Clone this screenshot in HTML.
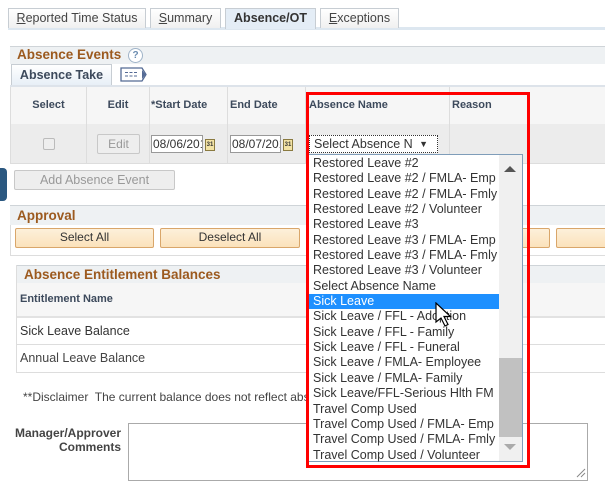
<!DOCTYPE html>
<html><head><meta charset="utf-8"><style>
*{box-sizing:border-box;margin:0;padding:0}
body{width:605px;height:482px;overflow:hidden;background:#fff;font-family:"Liberation Sans",Arial,sans-serif;font-size:12px;color:#333;position:relative}
.a{position:absolute}
.tab{position:absolute;top:8px;height:20px;border:1px solid #c7cdd3;border-bottom:none;background:linear-gradient(#fff,#f0f0f0);text-align:center;line-height:18px;font-size:12.5px;color:#444}
.tab u{text-decoration:underline}
.hdr{position:absolute;background:#eef1f3;border-top:1px solid #cfd4d8;font-weight:bold;font-size:13.5px;padding-left:7px;line-height:19px;color:#9c5a1f}
.th{position:absolute;top:87px;height:37px;line-height:37px;font-weight:bold;font-size:11px;color:#3d4a5c;text-align:center}
.btn{position:absolute;border:1px solid #d9a66a;border-radius:2px;background:linear-gradient(#fdf0da,#fbe2bb);text-align:center;line-height:17px;font-size:12px;color:#333}
.item{height:15.35px;line-height:15px;padding-left:4px;font-size:12.5px;color:#333;white-space:nowrap;overflow:hidden}
.cal{position:absolute;width:10px;height:12px;background:#f3e3a5;border:1px solid #8a7a40;font-size:6px;line-height:10px;text-align:center;font-weight:bold;color:#333}
</style></head><body>
<div class="a" style="left:8px;top:27px;width:597px;height:3px;background:#dde7f0"></div>
<div class="tab" style="left:8px;width:138px"><u>R</u>eported Time Status</div>
<div class="tab" style="left:150px;width:71px"><u>S</u>ummary</div>
<div class="tab" style="left:225px;width:91px;background:#e4edf6;font-weight:bold;color:#333;height:21px">Absence/OT</div>
<div class="tab" style="left:320px;width:79px"><u>E</u>xceptions</div>

<div class="hdr" style="left:10px;top:46px;width:595px;height:18px;line-height:16px">Absence Events <span style="display:inline-block;width:15px;height:15px;border:1px solid #9fb3c8;border-radius:50%;font-size:10px;line-height:13px;text-align:center;color:#6b8cb0;vertical-align:1px;margin-left:3px;background:#fff">?</span></div>
<div class="a" style="left:11px;top:64px;width:101px;height:22px;border:1px solid #c7cdd3;border-bottom:none;background:linear-gradient(#fff,#e6eef6);font-weight:bold;font-size:12.5px;color:#3d4a5c;text-align:center;line-height:20px">Absence Take</div>
<svg class="a" style="left:120px;top:67px" width="28" height="15"><path d="M1 1h21l4 6.5-4 6.5H1z" fill="#fff" stroke="#556b95" stroke-width="1.3"/><path d="M5 5.5h13M5 9h13" stroke="#556b95" stroke-dasharray="3 1.5"/><path d="M22 3l3.5 4.5L22 12z" fill="#556b95"/></svg>
<div class="a" style="left:10px;top:85px;width:595px;height:2px;background:#dde3ea"></div>
<div class="a" style="left:10px;top:87px;width:595px;height:37px;background:#f6f6f6"></div>
<div class="a" style="left:10px;top:124px;width:595px;height:39px;background:#ececec"></div>
<div class="a" style="left:10px;top:87px;width:1px;height:76px;background:#ddd"></div>
<div class="a" style="left:86px;top:87px;width:1px;height:76px;background:#ddd"></div>
<div class="a" style="left:149px;top:87px;width:1px;height:76px;background:#ddd"></div>
<div class="a" style="left:227px;top:87px;width:1px;height:76px;background:#ddd"></div>
<div class="a" style="left:305px;top:87px;width:1px;height:76px;background:#ddd"></div>
<div class="a" style="left:449px;top:87px;width:1px;height:76px;background:#ddd"></div>
<div class="a" style="left:10px;top:163px;width:595px;height:1px;background:#ddd"></div>
<div class="th" style="left:11px;width:75px">Select</div>
<div class="th" style="left:87px;width:62px">Edit</div>
<div class="th" style="left:151px;text-align:left">*Start Date</div>
<div class="th" style="left:230px;text-align:left">End Date</div>
<div class="th" style="left:309px;text-align:left">Absence Name</div>
<div class="th" style="left:452px;text-align:left">Reason</div>
<div class="a" style="left:43px;top:138px;width:12px;height:12px;border:1px solid #bbb;border-radius:2px;background:#eee"></div>
<div class="a" style="left:97px;top:134px;width:43px;height:20px;border:1px solid #c8c8c8;border-radius:2px;background:#eee;color:#999;text-align:center;line-height:18px">Edit</div>
<div class="a" style="left:151px;top:135px;width:52px;height:18px;border:1px solid #999;background:#fff;font-size:12px;line-height:16px;padding-left:1px;overflow:hidden;white-space:nowrap">08/06/201</div>
<div class="cal" style="left:205px;top:139px">31</div>
<div class="a" style="left:230px;top:135px;width:51px;height:18px;border:1px solid #999;background:#fff;font-size:12px;line-height:16px;padding-left:1px;overflow:hidden;white-space:nowrap">08/07/201</div>
<div class="cal" style="left:283px;top:139px">31</div>
<div class="a" style="left:309px;top:135px;width:129px;height:18px;border:1px dotted #333;background:#fff;font-size:12.5px;line-height:16px"><span style="position:absolute;left:4px;top:0;width:98px;overflow:hidden;white-space:nowrap">Select Absence Name</span><span style="position:absolute;right:9px;top:0;font-size:9px">▼</span></div>

<div class="a" style="left:0;top:168px;width:7px;height:33px;background:#2b5880;border-radius:0 4px 4px 0"></div>
<div class="a" style="left:14px;top:170px;width:161px;height:20px;border:1px solid #c8c8c8;border-radius:2px;background:#eee;color:#999;text-align:center;line-height:18px;font-size:12.5px">Add Absence Event</div>

<div class="hdr" style="left:10px;top:205px;width:595px;height:20px">Approval</div>
<div class="a" style="left:10px;top:225px;width:1px;height:31px;background:#ddd"></div>
<div class="a" style="left:10px;top:255px;width:595px;height:1px;background:#ddd"></div>
<div class="btn" style="left:15px;top:228px;width:139px;height:20px">Select All</div>
<div class="btn" style="left:160px;top:228px;width:140px;height:20px">Deselect All</div>
<div class="btn" style="left:480px;top:228px;width:70px;height:20px"></div>
<div class="btn" style="left:556px;top:228px;width:60px;height:20px"></div>

<div class="a" style="left:16px;top:265px;width:589px;height:108px;border-left:1px solid #ddd"></div>
<div class="hdr" style="left:17px;top:265px;width:588px;height:18px;line-height:18px">Absence Entitlement Balances</div>
<div class="a" style="left:17px;top:283px;width:588px;height:33px;background:#f6f6f6;font-weight:bold;font-size:11px;color:#3d4a5c;line-height:33px;padding-left:3px">Entitlement Name</div>
<div class="a" style="left:17px;top:316px;width:588px;height:2px;background:#e2e2e2"></div>
<div class="a" style="left:17px;top:318px;width:588px;height:27px;line-height:26px;padding-left:3px;font-size:12.5px;border-bottom:1px solid #ddd">Sick Leave Balance</div>
<div class="a" style="left:17px;top:345px;width:588px;height:28px;line-height:26px;padding-left:3px;font-size:12.5px;border-bottom:1px solid #ddd;color:#444">Annual Leave Balance</div>

<div class="a" style="left:23px;top:390px;white-space:nowrap;font-size:12px;color:#444">**Disclaimer&nbsp; The current balance does not reflect absences</div>
<div class="a" style="left:10px;top:426px;width:111px;text-align:right;font-weight:bold;font-size:12px;color:#444;line-height:14px">Manager/Approver<br>Comments</div>
<div class="a" style="left:128px;top:423px;width:460px;height:58px;border:1px solid #aaa;background:#fff"></div>
<svg class="a" style="left:574px;top:466px" width="12" height="12"><path d="M11 3L3 11M11 7L7 11" stroke="#888"/></svg>

<div class="a" style="left:308px;top:154px;width:215px;height:308px;border:1px solid #7f9db9;background:#fff">
<div class="a" style="left:190px;top:0;width:23px;height:306px;background:#f0f0f0"></div>
<div class="a" style="left:190px;top:203px;width:23px;height:79px;background:#c1c1c1"></div>
<div class="a" style="left:195px;top:11px;width:0;height:0;border-left:6px solid transparent;border-right:6px solid transparent;border-bottom:6px solid #555"></div>
<div class="a" style="left:195px;top:289px;width:0;height:0;border-left:6px solid transparent;border-right:6px solid transparent;border-top:6px solid #aaa"></div>
<div style="width:190px;margin-top:1px">
<div class="item">Restored Leave #2</div>
<div class="item">Restored Leave #2 / FMLA- Emp</div>
<div class="item">Restored Leave #2 / FMLA- Fmly</div>
<div class="item">Restored Leave #2 / Volunteer</div>
<div class="item">Restored Leave #3</div>
<div class="item">Restored Leave #3 / FMLA- Emp</div>
<div class="item">Restored Leave #3 / FMLA- Fmly</div>
<div class="item">Restored Leave #3 / Volunteer</div>
<div class="item">Select Absence Name</div>
<div class="item" style="background:#1e90ff;color:#fff">Sick Leave</div>
<div class="item">Sick Leave / FFL - Adoption</div>
<div class="item">Sick Leave / FFL - Family</div>
<div class="item">Sick Leave / FFL - Funeral</div>
<div class="item">Sick Leave / FMLA- Employee</div>
<div class="item">Sick Leave / FMLA- Family</div>
<div class="item">Sick Leave/FFL-Serious Hlth FM</div>
<div class="item">Travel Comp Used</div>
<div class="item">Travel Comp Used / FMLA- Emp</div>
<div class="item">Travel Comp Used / FMLA- Fmly</div>
<div class="item">Travel Comp Used / Volunteer</div>
</div></div>
<svg class="a" style="left:435px;top:302px" width="20" height="26"><path d="M1 1v19l5-4 4 8 3-1.5-4-8h6.5z" fill="#fff" stroke="#000" stroke-width="1.2"/></svg>
<div class="a" style="left:306px;top:92px;width:224px;height:376px;border:3px solid #f00"></div>
</body></html>
